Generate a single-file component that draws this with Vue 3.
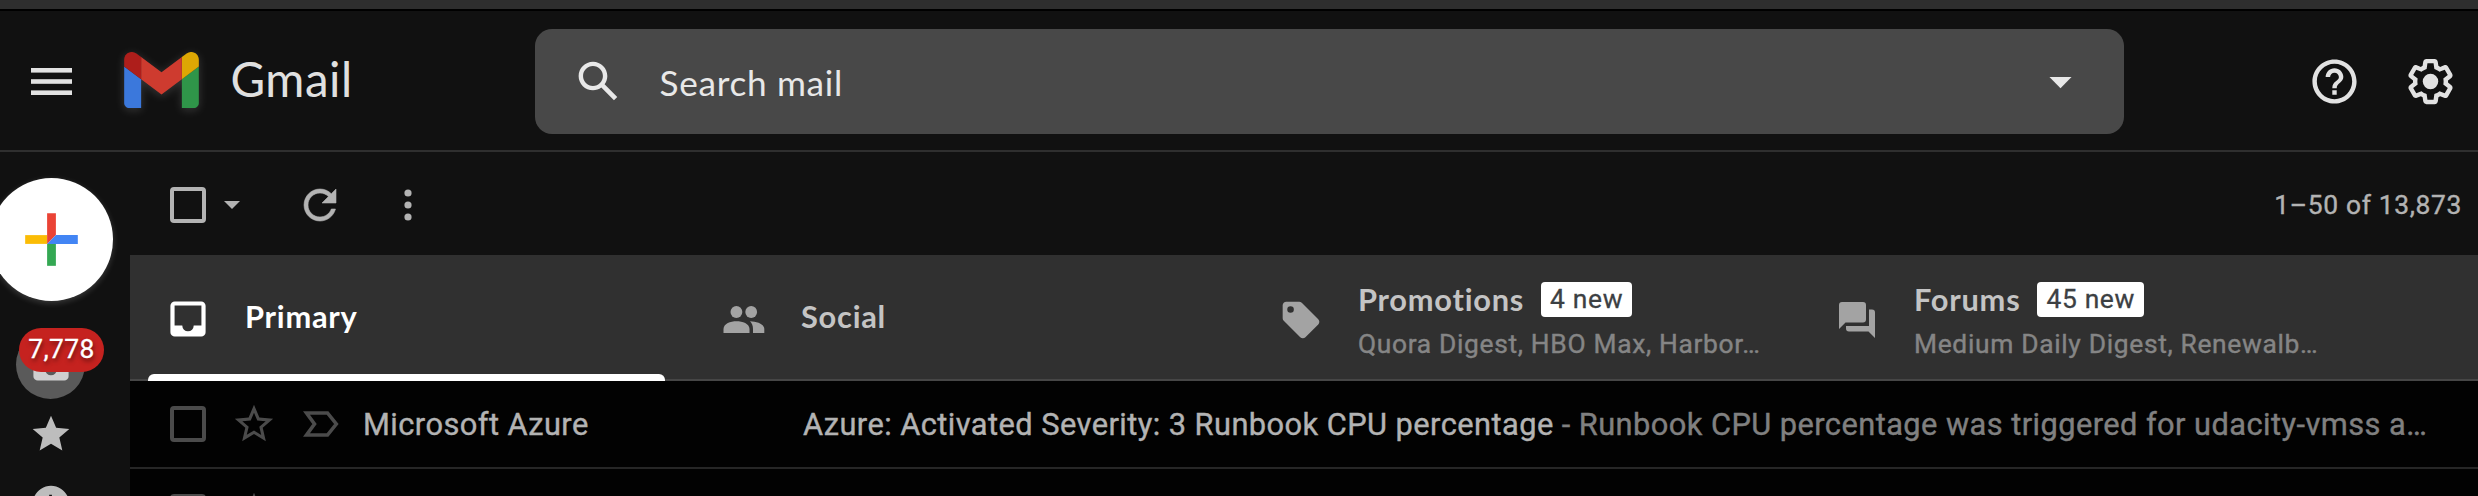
<script setup>
const tabs = [
  { id: 'primary', name: 'Primary', active: true },
  { id: 'social', name: 'Social' },
  { id: 'promotions', name: 'Promotions', chip: '4 new', sub: 'Quora Digest, HBO Max, Harbor…' },
  { id: 'forums', name: 'Forums', chip: '45 new', sub: 'Medium Daily Digest, Renewalb…' },
]
const rows = [
  {
    sender: 'Microsoft Azure',
    subject: 'Azure: Activated Severity: 3 Runbook CPU percentage',
    snippet: 'Runbook CPU percentage was triggered for udacity-vmss a…',
  },
  { sender: '', subject: '', snippet: '' },
]
</script>

<template>
  <div class="app">
    <div class="strip"></div>
    <header class="header">
      <svg class="burger" viewBox="0 0 41 27" fill="#e2e2e2">
        <rect width="41" height="4.6" /><rect y="11.2" width="41" height="4.6" /><rect y="22.4" width="41" height="4.6" />
      </svg>
      <svg class="logo" viewBox="52 42 88 66">
        <path fill="#3b78dc" d="M58 108h14V74L52 59v43c0 3.32 2.69 6 6 6" />
        <path fill="#2f9549" d="M120 108h14c3.32 0 6-2.69 6-6V59l-20 15" />
        <path fill="#dda704" d="M120 48v26l20-15v-8c0-7.42-8.47-11.65-14.4-7.2" />
        <path fill="#ce3b2f" d="M72 74V48l24 18 24-18v26L96 92" />
        <path fill="#ae1e1b" d="M52 51v8l20 15V48l-5.6-4.2c-5.94-4.45-14.4-.22-14.4 7.2" />
      </svg>
      <span class="brand">Gmail</span>
      <div class="search">
        <svg class="i53 glass" viewBox="0 0 24 24"><path d="M20.49,19l-5.73-5.73C15.53,12.2,16,10.91,16,9.5C16,5.91,13.09,3,9.5,3S3,5.91,3,9.5C3,13.09,5.91,16,9.5,16c1.41,0,2.7-0.47,3.77-1.24L19,20.49L20.49,19z M5,9.5C5,7.01,7.01,5,9.5,5S14,7.01,14,9.5S11.99,14,9.5,14S5,11.99,5,9.5z" /></svg>
        <span class="placeholder">Search mail</span>
        <svg class="i53 caret" viewBox="0 0 24 24"><path d="M7 10l5 5 5-5z" /></svg>
      </div>
      <svg class="i53 help" viewBox="0 0 24 24"><path d="M11 18h2v-2h-2v2zm1-16C6.48 2 2 6.48 2 12s4.48 10 10 10 10-4.48 10-10S17.52 2 12 2zm0 18c-4.41 0-8-3.59-8-8s3.59-8 8-8 8 3.59 8 8-3.59 8-8 8zm0-14c-2.21 0-4 1.79-4 4h2c0-1.1.9-2 2-2s2 .9 2 2c0 2-3 1.75-3 5h2c0-2.25 3-2.5 3-5 0-2.21-1.79-4-4-4z" /></svg>
      <svg class="i53 gear" viewBox="0 0 24 24">
        <path d="M13.85 22.25h-3.7c-.74 0-1.36-.54-1.45-1.27l-.27-1.89c-.27-.14-.53-.29-.79-.46l-1.8.72c-.7.26-1.47-.03-1.81-.65L2.2 15.53c-.35-.66-.2-1.44.36-1.88l1.53-1.19c-.01-.15-.02-.3-.02-.46 0-.15.01-.31.02-.46l-1.52-1.19c-.59-.45-.74-1.26-.37-1.88l1.85-3.19c.34-.62 1.11-.9 1.79-.63l1.81.73c.26-.17.52-.32.78-.46l.27-1.91c.09-.7.71-1.25 1.44-1.25h3.7c.74 0 1.36.54 1.45 1.27l.27 1.89c.27.14.53.29.79.46l1.8-.72c.71-.26 1.48.03 1.82.65l1.84 3.18c.36.66.2 1.44-.36 1.88l-1.52 1.19c.01.15.02.3.02.46s-.01.31-.02.46l1.52 1.19c.56.45.72 1.23.37 1.86l-1.86 3.22c-.34.62-1.11.9-1.8.63l-1.8-.72c-.26.17-.52.32-.78.46l-.27 1.91c-.1.68-.72 1.22-1.46 1.22zm-3.23-2h2.76l.37-2.55.53-.22c.44-.18.88-.44 1.34-.78l.45-.34 2.38.96 1.38-2.4-2.03-1.58.07-.56c.03-.26.06-.51.06-.78s-.03-.53-.06-.78l-.07-.56 2.03-1.58-1.39-2.4-2.39.96-.45-.35c-.42-.32-.87-.58-1.33-.77l-.52-.22-.37-2.55h-2.76l-.37 2.55-.53.21c-.44.19-.88.44-1.34.79l-.45.33-2.38-.95-1.39 2.39 2.03 1.58-.07.56a7 7 0 0 0-.06.79c0 .26.02.53.06.78l.07.56-2.03 1.58 1.38 2.4 2.39-.96.45.35c.43.33.86.58 1.33.77l.53.22.38 2.55z" />
        <circle cx="12" cy="12" r="3.5" />
      </svg>
    </header>

    <div class="body">
      <aside class="side">
        <div class="compose">
          <svg viewBox="0 0 36 36">
            <path fill="#34a853" d="M16 20v10h4V20z" /><path fill="#fbbc05" d="M6 16v4h10v-4z" />
            <path fill="#ea4335" d="M16 6h4v10l-4 4z" /><path fill="#4285f4" d="M30 16H20l-4 4h14z" />
          </svg>
        </div>
        <div class="nav-inbox">
          <svg viewBox="0 0 20 20"><path fill-rule="evenodd" d="M4 2h12a2 2 0 0 1 2 2v12a2 2 0 0 1-2 2H4a2 2 0 0 1-2-2V4c0-1.1.9-2 2-2zM3.9 3.9V13h3.5a2.6 2.6 0 0 0 5.2 0h3.5V3.9z" /></svg>
          <span class="badge">7,778</span>
        </div>
        <svg class="nav-icon star" viewBox="0 0 24 24"><path d="M12 17.27L18.18 21l-1.64-7.03L22 9.24l-7.19-.61L12 2 9.19 8.63 2 9.24l5.46 4.73L5.82 21z" /></svg>
        <svg class="nav-icon clock" viewBox="0 0 24 24"><path d="M12 2C6.5 2 2 6.5 2 12s4.5 10 10 10 10-4.5 10-10S17.5 2 12 2zm4.2 14.2L11 13V7h1.5v5.2l4.5 2.7-.8 1.3z" /></svg>
      </aside>

      <main class="main">
        <div class="toolbar">
          <span class="box"></span>
          <svg class="drop" viewBox="0 0 16 8"><path d="M0 0h16L8 8z" /></svg>
          <svg class="refresh" viewBox="0 0 24 24"><path d="M17.65 6.35C16.2 4.9 14.21 4 12 4c-4.42 0-7.99 3.58-7.99 8s3.57 8 7.99 8c3.73 0 6.84-2.55 7.73-6h-2.08c-.82 2.33-3.04 4-5.65 4-3.31 0-6-2.69-6-6s2.69-6 6-6c1.66 0 3.14.69 4.22 1.78L13 11h7V4l-2.35 2.35z" stroke="#b3b3b3" stroke-width=".3" /></svg>
          <svg class="dots" viewBox="0 0 8 32"><circle cx="4" cy="4" r="3.6" /><circle cx="4" cy="16" r="3.6" /><circle cx="4" cy="28" r="3.6" /></svg>
          <span class="count">1–50 of 13,873</span>
        </div>

        <div class="tabs">
          <div v-for="t in tabs" :key="t.id" class="tab" :class="{ active: t.active, stacked: t.sub }">
            <svg v-if="t.id === 'primary'" class="tab-icon" viewBox="0 0 20 20"><path fill-rule="evenodd" d="M4 2h12a2 2 0 0 1 2 2v12a2 2 0 0 1-2 2H4a2 2 0 0 1-2-2V4c0-1.1.9-2 2-2zM3.9 3.9V13h3.5a2.6 2.6 0 0 0 5.2 0h3.5V3.9z" /></svg>
            <svg v-else-if="t.id === 'social'" class="tab-icon" viewBox="0 0 44 44">
              <circle cx="14.4" cy="15" r="5.9" /><circle cx="29.2" cy="15" r="5.900" />
              <path d="M1.500 36v-4c0-5.500 7-7.800 13-7.800s13 2.300 13 7.800v4zM28 24.300c6.500.2 14.300 2.500 14.300 7.700v4H31v-4c0-3.500-1.200-6-3-7.700z" />
            </svg>
            <svg v-else-if="t.id === 'promotions'" class="tab-icon" viewBox="0 0 24 24"><path d="M21.410 11.580l-9-9C12.050 2.220 11.550 2 11 2H4c-1.100 0-2 .9-2 2v7c0 .55.22 1.050.59 1.420l9 9c.36.36.86.58 1.410.58.55 0 1.050-.22 1.410-.59l7-7c.37-.36.59-.86.59-1.410 0-.55-.23-1.060-.59-1.420zM6.300 8.100a1.800 1.800 0 1 1 0-3.600 1.800 1.800 0 0 1 0 3.600z" fill-rule="evenodd" /></svg>
            <svg v-else class="tab-icon" viewBox="0 0 44 44">
              <path d="M7 4h21a3 3 0 0 1 3 3v14.500a3 3 0 0 1-3 3H10.500L4 31V7a3 3 0 0 1 3-3z" />
              <path d="M34 11.500h3a3 3 0 0 1 3 3V40l-6.500-6.500H14a3 3 0 0 1-3-3V28h23z" />
            </svg>
            <div class="tab-text">
              <div class="tab-head"><span class="tab-name">{{ t.name }}</span><span v-if="t.chip" class="chip">{{ t.chip }}</span></div>
              <div v-if="t.sub" class="sub">{{ t.sub }}</div>
            </div>
          </div>
        </div>

        <div v-for="(r, i) in rows" :key="i" class="row">
          <span class="box"></span>
          <svg class="row-star" viewBox="0 0 24 24"><path d="M22 9.240l-7.190-.62L12 2 9.190 8.630 2 9.240l5.460 4.730L5.820 21 12 17.270 18.180 21l-1.630-7.030L22 9.240zM12 15.400l-3.760 2.270 1-4.280-3.320-2.880 4.380-.38L12 6.100l1.710 4.040 4.380.38-3.320 2.880 1 4.280L12 15.400z" /></svg>
          <svg class="mark" viewBox="0 0 36 26"><path d="M3.500 2H24.500L33.300 13 24.500 24H3.500L11.500 13z" fill="none" stroke="#4b4b4b" stroke-width="3.6" /></svg>
          <span class="sender">{{ r.sender }}</span>
          <span class="line"><span class="subject">{{ r.subject }}</span><span v-if="r.snippet" class="snippet">&nbsp;-&nbsp;{{ r.snippet }}</span></span>
        </div>
      </main>
    </div>
  </div>
</template>

<style>
body { background: #111; }
</style>

<style scoped>
.app { width: 2478px; height: 496px; overflow: hidden; background: #111; font-family: Roboto, "Liberation Sans", sans-serif; display: flex; flex-direction: column; }
.app *, .app { box-sizing: border-box; }
svg { display: block; flex: none; }
.strip { height: 11px; flex: none; background: #2e2e2e; border-bottom: 2px solid #000; }
.header { height: 141px; flex: none; display: flex; align-items: center; padding-top: 2px; border-bottom: 2px solid #2f2f2f; fill: #e2e2e2; }
.burger { width: 41px; height: 27px; margin-left: 31px; }
.logo { width: 75px; height: 56px; margin-left: 51.500px; margin-top: -3px; filter: drop-shadow(0 2px 5px rgba(255, 255, 255, .16)); }
.brand { width: 122px; margin: 0 0 5px 32px; font: 47.500px/60px Lato, sans-serif; letter-spacing: .5px; color: #e0e0e0; white-space: nowrap; }
.search { width: 1589px; height: 105px; margin-left: 182.500px; border-radius: 17px; background: #484848; display: flex; align-items: center; fill: #e8e8e8; }
.i53 { width: 53px; height: 53px; }
.glass { margin-left: 37px; }
.placeholder { margin-left: 34.500px; font: 35.200px/44px Lato, sans-serif; letter-spacing: .7px; color: #e8e8e8; }
.caret { margin-left: auto; margin-right: 37.500px; }
.help { margin-left: 184px; }
.gear { margin-left: 43px; }
.body { flex: 1; min-height: 0; display: flex; }
.side { width: 130px; flex: none; display: flex; flex-direction: column; fill: #bdbdbd; }
.compose { width: 123px; height: 123px; flex: none; margin: 26px 0 0 -10px; border-radius: 50%; background: #fff; display: grid; place-items: center; box-shadow: 0 2px 6px rgba(255, 255, 255, .18); }
.compose svg { width: 79px; height: 79px; }
.nav-inbox { position: relative; flex: none; width: 69px; height: 69px; margin: 29px 0 0 16px; border-radius: 50%; background: #5a5a5a; display: grid; place-items: center; fill: #cfcfcf; }
.nav-inbox svg { width: 44px; height: 44px; margin-top: -3px; }
.badge { position: absolute; left: 3px; top: -2px; width: 85px; height: 44px; border-radius: 22px; background: #c5221f; color: #fff; font-size: 26.400px; line-height: 43px; text-align: center; letter-spacing: .4px; -webkit-text-stroke: .3px; text-shadow: 1px 3px 4px rgba(0, 0, 0, .5); }
.nav-icon { width: 44px; height: 44px; margin-left: 29px; }
.star { margin-top: 13px; }
.clock { margin-top: 26px; }
.main { flex: 1; min-width: 0; display: flex; flex-direction: column; }
.toolbar { height: 103px; flex: none; display: flex; align-items: center; padding: 3px 16px 0 40px; fill: #b3b3b3; }
.box { width: 36px; height: 36px; flex: none; border: 4px solid #b3b3b3; border-radius: 4px; }
.drop { width: 16px; height: 8px; margin-left: 18px; margin-top: -1px; }
.refresh { width: 48px; height: 48px; margin-left: 56px; }
.dots { width: 8px; height: 32px; margin-left: 60px; }
.count { margin-left: auto; font-size: 26.400px; line-height: 36px; letter-spacing: .66px; color: #b3b3b3; -webkit-text-stroke: .4px; }
.tabs { height: 126px; flex: none; display: flex; background: #303030; border-bottom: 2px solid #464646; }
.tab { position: relative; width: 556px; flex: none; display: flex; align-items: center; padding-left: 36px; fill: #a3a3a3; color: #c4c4c4; }
.tab.active { fill: #fff; color: #fff; }
.tab.active::after { content: ""; position: absolute; left: 18px; bottom: -2px; width: 517px; height: 7px; background: #fff; border-radius: 6px 6px 0 0; }
.tab-icon { width: 44px; height: 44px; margin-top: 3px; }
.tab-text { margin-left: 35px; }
.stacked { padding-left: 37px; }
.stacked .tab-icon { margin-top: 5px; }
.stacked .tab-text { padding-top: 8px; }
.tab-head { display: flex; align-items: center; height: 36px; }
.tab-name { font: bold 30.800px/36px Lato, sans-serif; letter-spacing: .75px; }
.chip { height: 35px; margin-left: 17px; padding: 0 9px; border-radius: 4px; background: #fff; color: #3c4043; font-size: 26.400px; line-height: 35px; letter-spacing: .66px; white-space: nowrap; -webkit-text-stroke: .3px; }
.sub { margin-top: 9px; font-size: 26.400px; line-height: 34px; letter-spacing: .66px; color: #858585; white-space: nowrap; -webkit-text-stroke: .4px; }
.row { height: 88px; flex: none; display: flex; align-items: center; background: #020202; border-bottom: 2px solid #262626; padding-left: 40px; fill: #4b4b4b; }
.row .box { border-color: #4b4b4b; }
.row-star { width: 46px; height: 46px; margin-left: 25px; }
.mark { width: 36px; height: 26px; margin-left: 26px; }
.sender { width: 440px; flex: none; margin-left: 24px; font-size: 30.800px; letter-spacing: .44px; color: #b3b3b3; white-space: nowrap; -webkit-text-stroke: .4px; }
.line { font-size: 30.800px; letter-spacing: .44px; white-space: nowrap; -webkit-text-stroke: .4px; }
.subject { color: #b3b3b3; }
.snippet { color: #808080; }
</style>
